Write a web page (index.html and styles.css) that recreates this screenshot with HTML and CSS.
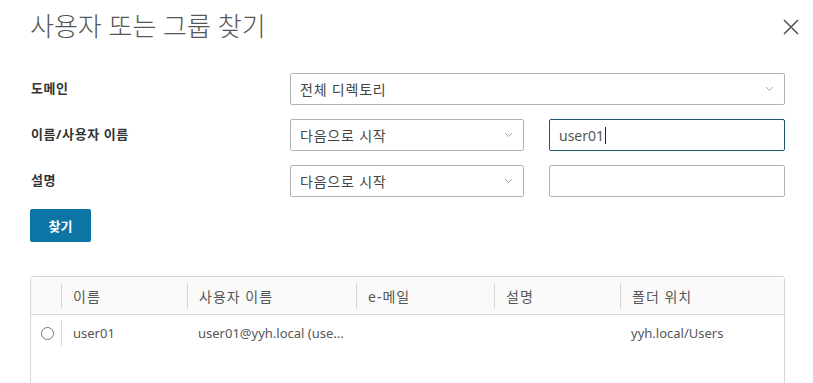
FILE: index.html
```html
<!DOCTYPE html>
<html lang="ko">
<head>
  <meta charset="UTF-8">
  <title>사용자 또는 그룹 찾기</title>
  <link rel="stylesheet" href="styles.css">
</head>
<body>
  <div class="dialog">
    <div class="dialog__header">
      <h1 class="dialog__title">사용자 또는 그룹 찾기</h1>
      <button class="dialog__close" aria-label="닫기">
        <svg width="18" height="18" viewBox="0 0 18 18"><path d="M2 2 L16 16 M16 2 L2 16" stroke="#565656" stroke-width="1.6" fill="none"/></svg>
      </button>
    </div>

    <div class="search-form">
      <label class="search-form__label">도메인</label>
      <div class="select select--wide">
        <span>전체 디렉토리</span>
        <svg class="select__chevron" width="9" height="6" viewBox="0 0 9 6"><path d="M1 1 L4.5 4.5 L8 1" stroke="#a5a5a5" stroke-width="1" fill="none"/></svg>
      </div>

      <label class="search-form__label">이름/사용자 이름</label>
      <div class="select">
        <span>다음으로 시작</span>
        <svg class="select__chevron" width="9" height="6" viewBox="0 0 9 6"><path d="M1 1 L4.5 4.5 L8 1" stroke="#a5a5a5" stroke-width="1" fill="none"/></svg>
      </div>
      <div class="text-input text-input--focus"><span>user01</span><span class="caret"></span></div>

      <label class="search-form__label">설명</label>
      <div class="select">
        <span>다음으로 시작</span>
        <svg class="select__chevron" width="9" height="6" viewBox="0 0 9 6"><path d="M1 1 L4.5 4.5 L8 1" stroke="#a5a5a5" stroke-width="1" fill="none"/></svg>
      </div>
      <div class="text-input"></div>
    </div>

    <button class="btn-primary">찾기</button>

    <div class="grid">
      <div class="grid__row grid__row--head">
        <div class="grid__cell grid__cell--select"></div>
        <div class="grid__cell grid__cell--name">이름</div>
        <div class="grid__cell grid__cell--user">사용자 이름</div>
        <div class="grid__cell grid__cell--mail">e-메일</div>
        <div class="grid__cell grid__cell--desc">설명</div>
        <div class="grid__cell grid__cell--folder">폴더 위치</div>
      </div>
      <div class="grid__row">
        <div class="grid__cell grid__cell--select"><span class="radio"></span></div>
        <div class="grid__cell grid__cell--name">user01</div>
        <div class="grid__cell grid__cell--user">user01@yyh.local (use...</div>
        <div class="grid__cell grid__cell--mail"></div>
        <div class="grid__cell grid__cell--desc"></div>
        <div class="grid__cell grid__cell--folder">yyh.local/Users</div>
      </div>
    </div>
  </div>
</body>
</html>
```

FILE: styles.css
```css
body, html {
  margin: 0;
  background: #fff;
  overflow: hidden;
}

body {
  font-family: "Noto Sans", "Noto Sans CJK KR", sans-serif;
  color: #333;
  font-size: 13px;
}

.dialog {
  padding: 0 29px 0 30px;
}

.dialog__header {
  display: flex;
  justify-content: space-between;
  align-items: center;
  height: 52px;
}

.dialog__title {
  margin: 0;
  font-size: 26px;
  font-weight: 300;
  color: #565656;
  margin-top: -2px;
}

.dialog__close {
  border: 0;
  background: none;
  padding: 0;
  margin-right: -16px;
  margin-top: 2px;
  width: 18px;
  height: 18px;
}

.search-form {
  display: grid;
  grid-template-columns: 235px 234px 236px;
  column-gap: 25px;
  row-gap: 14px;
  margin-top: 21px;
  align-items: center;
}

.search-form__label {
  font-weight: 700;
  color: #333;
  padding-left: 1px;
  margin-top: -3px;
  letter-spacing: 0.6px;
}

.select,
.text-input {
  height: 30px;
  border: 1px solid #b3b3b3;
  border-radius: 2px;
  display: flex;
  align-items: center;
  padding: 0 9px;
  color: #444;
  box-sizing: content-box;
}

.select {
  justify-content: space-between;
  font-size: 14px;
  letter-spacing: 0.8px;
}

.select--wide {
  grid-column: 2 / 4;
}

.select__chevron {
  margin-right: 1px;
}

.text-input {
  font-size: 14px;
  color: #565656;
}

.text-input--focus {
  border-color: #1f5770;
}

.caret {
  display: inline-block;
  width: 1px;
  height: 17px;
  background: #222;
  margin-left: 1px;
}

.btn-primary {
  margin-top: 12px;
  display: block;
  width: 61px;
  height: 33px;
  border: 0;
  border-radius: 2px;
  background: #0d74a6;
  color: #fff;
  font-family: inherit;
  font-weight: 700;
  font-size: 13px;
  padding: 0;
}

.grid {
  margin-top: 34px;
  width: 755px;
  height: 120px;
  border: 1px solid #d7d7d7;
  border-radius: 3px;
  box-sizing: border-box;
}

.grid__row {
  display: flex;
  height: 36px;
  align-items: center;
  color: #565656;
}

.grid__row--head {
  height: 37px;
  background: #fafafa;
  border-bottom: 1px solid #d7d7d7;
  font-size: 14px;
  letter-spacing: 1px;
}

.grid__cell {
  box-sizing: border-box;
  padding-left: 11px;
  height: 26px;
  display: flex;
  align-items: center;
  white-space: nowrap;
}

.grid__row--head .grid__cell + .grid__cell,
.grid__cell--name {
  border-left: 1px solid #d7d7d7;
}

.grid__row:not(.grid__row--head) .grid__cell--name ~ .grid__cell {
  border-left-color: transparent;
}

.grid__cell--select {
  width: 30px;
  padding-left: 0;
  justify-content: center;
}

.grid__cell--name { width: 126px; }
.grid__cell--user { width: 169px; }
.grid__cell--mail { width: 138px; }
.grid__cell--desc { width: 126px; }
.grid__cell--folder { flex: 1; }

.radio {
  width: 11px;
  height: 11px;
  border: 1px solid #777;
  border-radius: 50%;
  margin-left: 2px;
}
```
